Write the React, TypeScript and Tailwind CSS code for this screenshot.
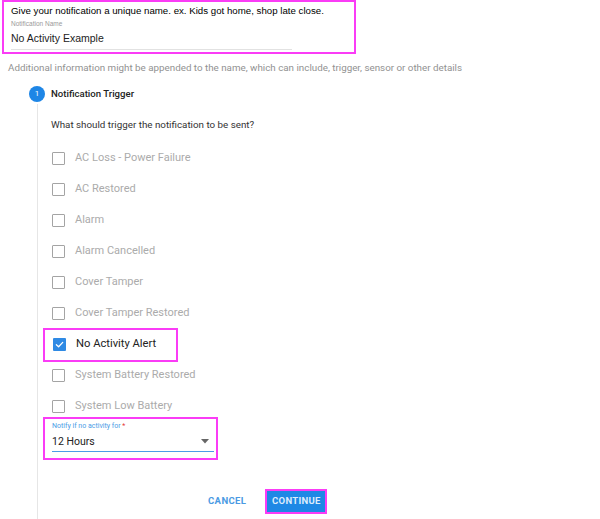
import React from 'react';

const triggers = [
  { label: 'AC Loss - Power Failure', checked: false },
  { label: 'AC Restored', checked: false },
  { label: 'Alarm', checked: false },
  { label: 'Alarm Cancelled', checked: false },
  { label: 'Cover Tamper', checked: false },
  { label: 'Cover Tamper Restored', checked: false },
  { label: 'No Activity Alert', checked: true },
  { label: 'System Battery Restored', checked: false },
  { label: 'System Low Battery', checked: false },
];

function Checkbox({ checked }: { checked: boolean }) {
  if (checked) {
    return (
      <span className="flex h-[13px] w-[13px] shrink-0 items-center justify-center rounded-[1px] bg-[#2f8ae4]">
        <svg width="9" height="9" viewBox="0 0 10 10" fill="none">
          <path d="M1.5 5.2 L4 7.5 L8.6 2.6" stroke="#fff" strokeWidth="1.4" strokeLinecap="round" strokeLinejoin="round" />
        </svg>
      </span>
    );
  }
  return <span className="h-[13px] w-[13px] shrink-0 rounded-[1px] border-[1.5px] border-[#a4a4a4] bg-white" />;
}

export default function App() {
  return (
    <div className="h-[519px] w-[600px] overflow-hidden bg-white font-['Roboto',sans-serif]">
      {/* Name block */}
      <div className="ml-[2px] h-[54px] w-[354px] border-2 border-[#fa3cf6] px-[7px] pt-[2px] font-['Liberation_Sans',Arial,sans-serif]">
        <p className="text-[9.7px] leading-[13px] text-black">
          Give your notification a unique name. ex. Kids got home, shop late close.
        </p>
        <div className="mt-[3px] text-[6.5px] leading-[8px] text-[#9a9a9a]">Notification Name</div>
        <div className="mt-[4px] w-[281px] border-b border-[#e2e2e2] pb-[4px] text-[10.5px] leading-[13px] text-[#222]">
          No Activity Example
        </div>
      </div>

      <p className="ml-[8px] mt-[8px] text-[9.8px] leading-[12px] text-[#929292]">
        Additional information might be appended to the name, which can include, trigger, sensor or other details
      </p>

      {/* Step */}
      <div className="mt-[12px] flex">
        <div className="ml-[29px] flex w-[16px] flex-col items-center">
          <span className="flex h-[16px] w-[16px] items-center justify-center rounded-full bg-[#1e86e6] text-[8px] leading-none text-white">
            1
          </span>
          <span className="mt-[2px] h-[500px] w-px bg-[#e6e6e6]" />
        </div>
        <div className="ml-[6px] flex-1">
          <div className="flex h-[16px] items-center text-[9.6px] font-medium text-[#222]">Notification Trigger</div>
          <p className="mt-[17px] text-[9.8px] leading-[12px] text-[#333]">What should trigger the notification to be sent?</p>

          <div className="mt-[12px] flex flex-col">
            {triggers.map((t) =>
              t.checked ? (
                <div
                  key={t.label}
                  className="-my-[1.5px] -ml-[8px] flex h-[34px] w-[135px] items-center border-2 border-[#fa3cf6] pl-[8px]"
                >
                  <Checkbox checked />
                  <span className="ml-[10px] text-[11.2px] text-[#222]">{t.label}</span>
                </div>
              ) : (
                <div key={t.label} className="flex h-[31px] items-center pl-[1px]">
                  <Checkbox checked={false} />
                  <span className="ml-[10px] text-[11px] text-[#ababab]">{t.label}</span>
                </div>
              )
            )}
          </div>

          {/* Dropdown */}
          <div className="-ml-[8px] -mt-[5px] h-[43px] w-[175px] border-2 border-[#fa3cf6] pl-[7px] pr-[2px] pt-[3px]">
            <div className="text-[7px] leading-[8px] text-[#4b9ce6]">
              Notify if no activity for <span className="text-[#e53935]">*</span>
            </div>
            <div className="mt-[5px] flex items-center justify-between border-b-[1.5px] border-[#4b9ce6] pb-[3px] pr-[5px]">
              <span className="text-[10.5px] leading-[13px] text-[#222]">12 Hours</span>
              <svg width="8" height="5" viewBox="0 0 8 5">
                <path d="M0 0 L8 0 L4 4.5 Z" fill="#666" />
              </svg>
            </div>
          </div>

          {/* Actions */}
          <div className="ml-[151px] mt-[29px] flex items-center">
            <button className="px-[6px] text-[9.5px] font-bold tracking-[0.4px] text-[#4a9ae3]">CANCEL</button>
            <div className="ml-[13px] border-2 border-[#fa3cf6]">
              <button className="flex h-[21px] w-[58px] items-center justify-center bg-[#1e88e5] text-[9.5px] font-bold tracking-[0.3px] text-[#dcecfc]">
                CONTINUE
              </button>
            </div>
          </div>
        </div>
      </div>
    </div>
  );
}
